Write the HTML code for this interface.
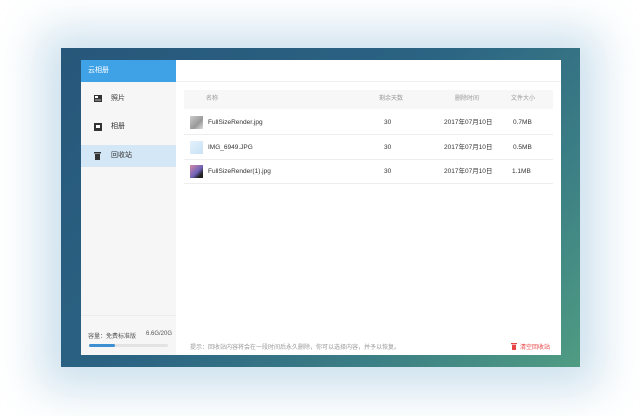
<!DOCTYPE html>
<html><head><meta charset="utf-8"><style>
*{margin:0;padding:0;box-sizing:border-box}
body{width:640px;height:416px;background:#fff;position:relative;overflow:hidden;font-family:"Liberation Sans","Noto Sans CJK SC",sans-serif}
.glow{position:absolute;left:40px;top:30px;width:560px;height:360px;background:#9cc3dc;filter:blur(22px);opacity:.5}
.outer{position:absolute;left:61px;top:48px;width:519px;height:319px;background:linear-gradient(135deg,#27577a 0%,#2b6383 45%,#3c7f85 75%,#4f9c82 100%)}
.win{position:absolute;left:81px;top:60px;width:480px;height:295px;background:#fff}
.side{position:absolute;left:0;top:0;width:95px;height:295px;background:#f6f6f6}
.logo{height:22px;background:#3fa2e6;color:#fff;font-size:7px;line-height:22px;padding-left:7px}
.hdr{position:absolute;left:95px;top:0;right:0;height:22px;background:#fff;border-bottom:1px solid #f0f0f0}
.item{position:absolute;left:0;width:95px;height:22px;font-size:7px;color:#333;line-height:22px;padding-left:30px}
.item svg{position:absolute;left:13px;top:7px}
.sel{background:#d4e7f6}
.th{position:absolute;left:103px;top:30px;width:369px;height:19px;background:#f7f7f7;font-size:6px;color:#999}
.row{position:absolute;left:103px;width:369px;height:25px;border-bottom:1px solid #eee;font-size:6.5px;color:#333}
.c{position:absolute;top:0;line-height:25px}
.th .c{line-height:19px}
.thumb{position:absolute;left:6px;top:6px;width:13px;height:13px}
.foot{position:absolute;font-size:6px}
</style></head><body>
<div class="glow"></div>
<div class="outer"></div>
<div class="win">
 <div class="side">
  <div class="logo">云相册</div>
  <div class="item" style="top:28px"><svg width="8" height="7" viewBox="0 0 8 7"><rect width="8" height="7" fill="#333"/><rect x="1" y="1" width="3" height="2" fill="#fff"/><rect x="1" y="4" width="6" height="2" fill="#777"/></svg>照片</div>
  <div class="item" style="top:56px"><svg width="8" height="8" viewBox="0 0 8 8"><rect width="8" height="8" fill="#333"/><rect x="2" y="2" width="4" height="3" fill="#fff"/></svg>相册</div>
  <div class="item sel" style="top:85px"><svg width="7" height="8" viewBox="0 0 7 8"><rect x="0" y="0" width="7" height="1.5" fill="#333"/><rect x="1" y="2" width="5" height="6" fill="#333"/></svg>回收站</div>
  <div style="position:absolute;left:0;right:0;top:255px;border-top:1px solid #ececec"></div>
  <div class="foot" style="left:7px;top:271px;color:#555">容量：免费标准版</div>
  <div class="foot" style="left:65px;top:271px;color:#555">6.6G/20G</div>
  <div style="position:absolute;left:8px;top:284px;width:79px;height:3px;background:#e3e3e3;border-radius:2px"><div style="width:26px;height:3px;background:#3d8fd1;border-radius:2px"></div></div>
 </div>
 <div class="hdr"></div>
 <div class="th"><span class="c" style="left:22px">名称</span><span class="c" style="left:195px">剩余天数</span><span class="c" style="left:271px">删除时间</span><span class="c" style="left:327px">文件大小</span></div>
 <div class="row" style="top:50px"><div class="thumb" style="background:linear-gradient(135deg,#ccc,#999 60%,#ddd)"></div><span class="c" style="left:24px">FullSizeRender.jpg</span><span class="c" style="left:200px">30</span><span class="c" style="left:260px">2017年07月10日</span><span class="c" style="left:329px">0.7MB</span></div>
 <div class="row" style="top:75px"><div class="thumb" style="background:linear-gradient(135deg,#e4f1fb,#c8e2f5)"></div><span class="c" style="left:24px">IMG_6949.JPG</span><span class="c" style="left:200px">30</span><span class="c" style="left:260px">2017年07月10日</span><span class="c" style="left:329px">0.5MB</span></div>
 <div class="row" style="top:99px"><div class="thumb" style="background:linear-gradient(135deg,#d889a6,#6e62b8 55%,#222 80%)"></div><span class="c" style="left:24px">FullSizeRender(1).jpg</span><span class="c" style="left:200px">30</span><span class="c" style="left:260px">2017年07月10日</span><span class="c" style="left:328px">1.1MB</span></div>
 <div class="foot" style="left:109px;top:282px;color:#999">提示：回收站内容将会在一段时间后永久删除，你可以选择内容，并予以恢复。</div>
 <div class="foot" style="left:430px;top:282px;color:#e84545"><svg width="6" height="7" viewBox="0 0 6 7" style="margin-right:3px;vertical-align:-1px"><rect width="6" height="1.2" fill="#e84545"/><rect x="1" y="1.8" width="4" height="5.2" fill="#e84545"/></svg>清空回收站</div>
</div>
</body></html>
